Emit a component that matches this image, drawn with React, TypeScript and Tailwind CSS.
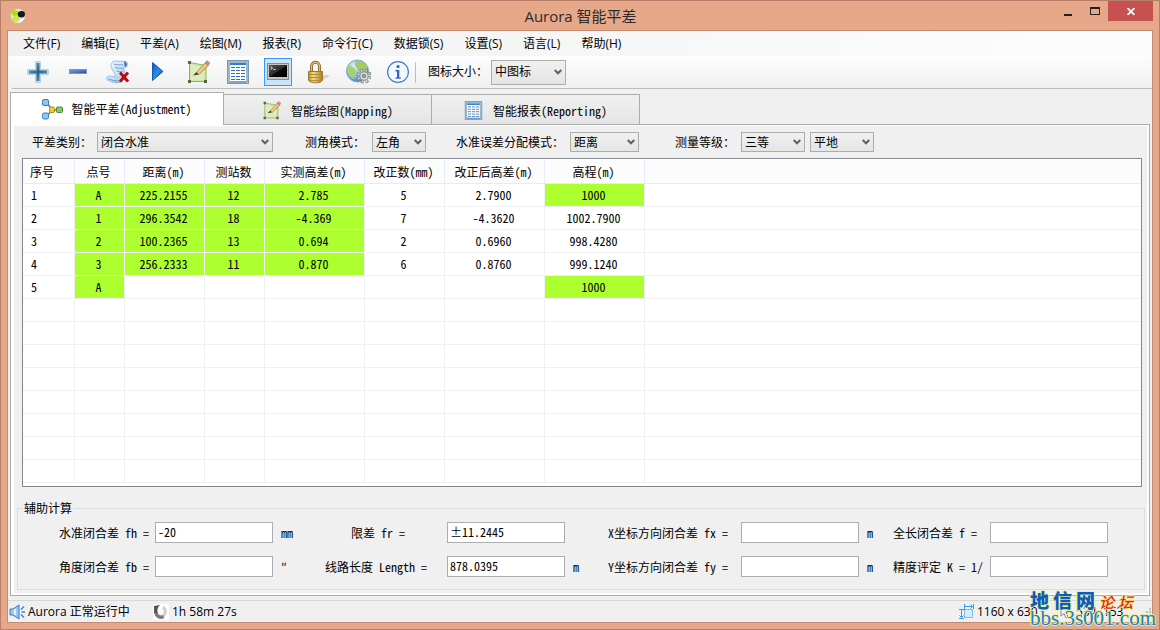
import React from "react";

const SONG = "font-['Noto_Sans_Mono_CJK_SC','DejaVu_Sans_Mono','Noto_Sans_CJK_SC',monospace]";
const UI = "font-['Open_Sans','Noto_Sans_CJK_SC',sans-serif]";

const menus = [
  "文件(F)",
  "编辑(E)",
  "平差(A)",
  "绘图(M)",
  "报表(R)",
  "命令行(C)",
  "数据锁(S)",
  "设置(S)",
  "语言(L)",
  "帮助(H)",
];

const columns = [
  { title: "序号", width: "w-[52px]" },
  { title: "点号", width: "w-[50px]" },
  { title: "距离(m)", width: "w-[80px]" },
  { title: "测站数", width: "w-[60px]" },
  { title: "实测高差(m)", width: "w-[100px]" },
  { title: "改正数(mm)", width: "w-[80px]" },
  { title: "改正后高差(m)", width: "w-[100px]" },
  { title: "高程(m)", width: "w-[100px]" },
  { title: "", width: "" },
];

const rows = [
  { cells: ["1", "A", "225.2155", "12", "2.785", "5", "2.7900", "1000"], green: [1, 2, 3, 4, 7] },
  { cells: ["2", "1", "296.3542", "18", "-4.369", "7", "-4.3620", "1002.7900"], green: [1, 2, 3, 4] },
  { cells: ["3", "2", "100.2365", "13", "0.694", "2", "0.6960", "998.4280"], green: [1, 2, 3, 4] },
  { cells: ["4", "3", "256.2333", "11", "0.870", "6", "0.8760", "999.1240"], green: [1, 2, 3, 4] },
  { cells: ["5", "A", "", "", "", "", "", "1000"], green: [1, 7] },
  ...Array.from({ length: 8 }, () => ({ cells: [] as string[], green: [] as number[] })),
];

/* ---------- icons ---------- */

const AppIcon = () => (
  <svg width="16" height="16" viewBox="0 0 16 16">
    <circle cx="8" cy="8" r="7.5" fill="#e9e9e4" stroke="#c9b8a8" />
    <ellipse cx="5" cy="5" rx="3.4" ry="3" fill="#b8d820" />
    <ellipse cx="5.8" cy="10.8" rx="3.8" ry="2.8" fill="#cfe63a" />
    <ellipse cx="11.4" cy="6.2" rx="3.6" ry="3.2" fill="#16181a" />
    <path d="M10 12c2 0 3.5-1 4-2.5-.5 3-2.5 4.5-5 4.5z" fill="#fff" />
  </svg>
);

const PlusIcon = () => (
  <svg width="24" height="24" viewBox="0 0 24 24">
    <defs>
      <linearGradient id="plus" x1="0" y1="0" x2="1" y2="1">
        <stop offset="0" stopColor="#7fabc9" />
        <stop offset="0.5" stopColor="#28628f" />
        <stop offset="1" stopColor="#7aa9c6" />
      </linearGradient>
    </defs>
    <path d="M9.500 1.500h5v8h8v5h-8v8h-5v-8h-8v-5h8z" fill="#bcd8e8" stroke="#b5d2e3" />
    <path d="M10.500 3h3v7.500H21v3h-7.500V21h-3v-7.500H3v-3h7.500z" fill="url(#plus)" />
  </svg>
);

const MinusIcon = () => (
  <svg width="24" height="24" viewBox="0 0 24 24">
    <defs>
      <linearGradient id="minus" x1="0" y1="0" x2="1" y2="1">
        <stop offset="0" stopColor="#7ba6ea" />
        <stop offset="1" stopColor="#1f48a0" />
      </linearGradient>
    </defs>
    <rect x="3.5" y="9.5" width="17" height="4" fill="url(#minus)" stroke="#7f93c2" />
  </svg>
);

const ScrollIcon = () => (
  <svg width="24" height="24" viewBox="0 0 24 24">
    <defs>
      <linearGradient id="scroll" x1="0" y1="0" x2="1" y2="1">
        <stop offset="0" stopColor="#f6fbff" />
        <stop offset="0.5" stopColor="#cfe5f6" />
        <stop offset="1" stopColor="#7fb2de" />
      </linearGradient>
    </defs>
    <path d="M6 3C7 .5 9 .8 11 1.200c3.500.5 6-.4 9 .3 2.500 1 2 4.500.5 5.500-1 .5-2 .2-2.500-.5-.5 3 1 6 1 9 0 4-2 6.500-5 7-4.500.8-9-.5-12.500-2.500C-.3 19 .5 16 3 16c2 0 4 1 6 1 1-3-3-7-4-10.500C4.500 5 5.300 4 6 3z" fill="url(#scroll)" stroke="#86b2d8" strokeWidth=".8" />
    <path d="M8 4c3 1.500 6 .5 9 .8M9 7.500c3 1 5 .4 8 .8M10.500 11c2 .8 4 .5 6.500.7M2 18.500c4 2 8 2.800 12 2.500" stroke="#6a9fd0" fill="none" />
    <path d="M18 1.500c3 0 3.500 4 1.500 5.500C18 6 18.500 3.500 18 1.500z" fill="#34689d" />
    <path d="M14 12.500l8 9M22 12.500l-8 9" stroke="#fff" strokeWidth="4.500" opacity=".5" />
    <path d="M14 12.500l8 9M22 12.500l-8 9" stroke="#b30d12" strokeWidth="3" />
  </svg>
);

const PlayIcon = () => (
  <svg width="24" height="24" viewBox="0 0 24 24">
    <defs>
      <linearGradient id="play" x1="0" y1="0" x2="1" y2="1">
        <stop offset="0" stopColor="#0d55b8" />
        <stop offset="0.5" stopColor="#2f8be6" />
        <stop offset="1" stopColor="#0a4aa8" />
      </linearGradient>
    </defs>
    <path d="M6.500 2.500v18L17 11.500z" fill="url(#play)" stroke="#1258b4" />
  </svg>
);

const MapIcon = ({ size = 24 }: { size?: number }) => (
  <svg width={size} height={size} viewBox="0 0 24 24">
    <path d="M3.500 2.500L20 5.500v16H3.500z" fill="#d3e6aa" stroke="#93b06a" />
    <path d="M5 5l13 2.500V20H5z" fill="#ddedbd" />
    <path d="M2 1h3v3H2zM2 20h3v3H2zM18 20h3v3h-3z" fill="#4f6a3a" />
    <path d="M10.500 12.500L19.500 2.500l3 2.500L13 14.500z" fill="#ecc46c" stroke="#9c7636" strokeWidth=".8" />
    <path d="M11.500 13L21 3.500" stroke="#f9e3a4" />
    <path d="M19 3l2-2.500L24 3l-2 2.500z" fill="#d9897c" stroke="#a86a60" strokeWidth=".5" />
    <path d="M7 15.500l3.500-3.500 2 2.500z" fill="#3f3d2c" />
  </svg>
);

const SheetIcon = ({ size = 24 }: { size?: number }) => (
  <svg width={size} height={size} viewBox="0 0 24 24">
    <rect x="1.5" y=".5" width="21" height="23" fill="#9db8cc" stroke="#7b98b0" />
    <rect x="4" y="3" width="16" height="18" fill="#fdfeff" />
    <path d="M4 4h16" stroke="#2b7fd6" strokeWidth="2" />
    <path d="M5 7.5h15M5 10.500h15M5 13.500h15M5 16.500h15M5 19.500h15" stroke="#2f6fb6" strokeDasharray="4 1" />
    <path d="M4 22h16" stroke="#5f92c0" />
  </svg>
);

const ConsoleIcon = () => (
  <svg width="24" height="24" viewBox="0 0 24 24">
    <defs>
      <linearGradient id="console" x1="0" y1="0" x2="1" y2="1">
        <stop offset="0" stopColor="#555" />
        <stop offset="0.5" stopColor="#2c2c2c" />
        <stop offset="0.52" stopColor="#0a0a0a" />
        <stop offset="1" stopColor="#000" />
      </linearGradient>
    </defs>
    <rect x="1.5" y="3.5" width="21" height="16" fill="#c4c6c8" stroke="#8a8d90" />
    <rect x="3" y="5" width="18" height="12" fill="url(#console)" />
    <path d="M4.500 6.500l2 1.500-2 1.500M7.500 9.500h2" stroke="#e8e8e8" fill="none" />
  </svg>
);

const LockIcon = () => (
  <svg width="24" height="24" viewBox="0 0 24 24">
    <defs>
      <linearGradient id="lock" x1="0" y1="0" x2="1" y2="0">
        <stop offset="0" stopColor="#c0923a" />
        <stop offset="0.35" stopColor="#f3d88a" />
        <stop offset="1" stopColor="#a87a28" />
      </linearGradient>
    </defs>
    <path d="M15 21l9-5-3-1-6 1z" fill="#bbb" opacity=".6" />
    <path d="M5.500 12V6.500C5.500.8 13.500.8 13.500 6.500V12" fill="none" stroke="#8c6f30" strokeWidth="3" />
    <path d="M5.500 12V6.500C5.500 1 13.500 1 13.500 6.500V12" fill="none" stroke="#dcc07a" strokeWidth="1.200" />
    <path d="M2.500 11.500h14v9c-2 3-12 3-14 0z" fill="url(#lock)" stroke="#9b7628" />
    <path d="M3 14.500h13M3 17.500h13M3 20.500h13" stroke="#b48c3c" />
  </svg>
);

const GlobeIcon = () => (
  <svg width="26" height="26" viewBox="0 0 26 26">
    <defs>
      <radialGradient id="globe" cx=".35" cy=".3" r=".8">
        <stop offset="0" stopColor="#e2f2fc" />
        <stop offset="0.6" stopColor="#7ab6de" />
        <stop offset="1" stopColor="#3873a8" />
      </radialGradient>
    </defs>
    <circle cx="12.5" cy="12" r="11" fill="url(#globe)" stroke="#7ea8c8" />
    <path d="M11 2c4-1 9 1 11 4 1 3 0 5-2 5-2 1-3 0-5 1-2 0-3-1-3-3-2-2-3-3-1-7z" fill="#a3c96c" />
    <path d="M3 7c3-1 7 2 8 5 0 3-2 4-2 8-4-1-8-7-6-13z" fill="#a9cf74" />
    <circle cx="19" cy="17" r="5.6" fill="none" stroke="#7b7b7b" strokeWidth="3.800" strokeDasharray="2.600 1.800" />
    <circle cx="19" cy="17" r="5.400" fill="none" stroke="#dedede" strokeWidth="2.600" strokeDasharray="1.400 2.840" strokeDashoffset="-.6" />
    <circle cx="19" cy="17" r="4.200" fill="#e6e6e6" stroke="#9a9a9a" strokeWidth="1.400" />
    <circle cx="19" cy="17" r="1.800" fill="#8fb0a0" stroke="#777" />
  </svg>
);

const InfoIcon = () => (
  <svg width="24" height="24" viewBox="0 0 24 24">
    <circle cx="12" cy="12" r="10.4" fill="#f3f8fe" stroke="#4a7cc4" strokeWidth="1.200" />
    <circle cx="12" cy="6.500" r="1.600" fill="#2b66c0" />
    <path d="M9.500 10h3.800v7.500h1.500v1.300H9.500v-1.300H11v-6H9.500z" fill="#2b66c0" />
  </svg>
);

const NetworkIcon = () => (
  <svg width="21" height="21" viewBox="0 0 21 21">
    <path d="M5 4l5 7M5 17l5-6M10 11h7" stroke="#767676" fill="none" strokeWidth="1.500" />
    <rect x=".5" y=".5" width="6" height="6" rx="1.500" fill="#8fc6f4" stroke="#3c7cbc" />
    <rect x=".5" y="14" width="6" height="6" rx="1.500" fill="#8fc6f4" stroke="#3c7cbc" />
    <rect x="7.500" y="8" width="5" height="5.500" rx="1.500" fill="#f4cd2c" stroke="#b3901a" />
    <rect x="14.500" y="8" width="6" height="5.500" rx="1" fill="#8cc468" stroke="#4d8a3a" />
  </svg>
);

const SpeakerIcon = () => (
  <svg width="17" height="16" viewBox="0 0 17 16">
    <path d="M1 5h3l6-4v14l-6-4H1z" fill="#9ccbf2" stroke="#3878bd" />
    <path d="M6 5v6" stroke="#fff" strokeWidth="1.500" />
    <path d="M12 5.500l3-3M12.500 8h3.500M12 10.500l3 3" stroke="#4184c6" strokeWidth="1.500" />
  </svg>
);

const SpinnerIcon = () => (
  <svg width="16" height="16" viewBox="0 0 16 16">
    <rect width="16" height="16" fill="#fdfdfd" />
    <path d="M10 3.200A5.500 5.500 0 0 1 8 13" fill="none" stroke="#cfcfcf" strokeWidth="3" />
    <path d="M10.500 12.500C7 14.500 3 12 3 8" fill="none" stroke="#7a7a7a" strokeWidth="3.500" />
    <path d="M1 2l6-1c-2 2-3 4-2.500 8L1 9z" fill="#555" />
  </svg>
);

const SizeIcon = () => (
  <svg width="15" height="15" viewBox="0 0 15 15">
    <rect x="5.5" y="5.5" width="8" height="8" fill="#d6ecfb" stroke="#49a4e6" strokeDasharray="2 1" />
    <path d="M5.500 2.500h8M11.500.5l2 2-2 2M5.500 0v5M14.500 0v5M2.500 5.500v8M.5 11.500l2 2 2-2M0 5.500h5M0 14.500h5" fill="none" stroke="#3a9be2" />
  </svg>
);

const CursorIcon = () => (
  <svg width="12" height="16" viewBox="0 0 12 16">
    <path d="M1 1v11l3-2.500 2 4.500 2-1-2-4.500h4z" fill="#f6f6f6" stroke="#8a8a8a" />
  </svg>
);

const GripIcon = () => (
  <svg width="8" height="8" viewBox="0 0 8 8">
    <path d="M6 0h2v2H6zM3 3h2v2H3zM6 3h2v2H6zM0 6h2v2H0zM3 6h2v2H3zM6 6h2v2H6z" fill="#bcbcbc" />
  </svg>
);

const toolbar = [
  { label: "添加", icon: <PlusIcon /> },
  { label: "删除", icon: <MinusIcon /> },
  { label: "清空", icon: <ScrollIcon /> },
  { label: "计算", icon: <PlayIcon /> },
  { label: "绘图", icon: <MapIcon /> },
  { label: "报表", icon: <SheetIcon /> },
  { label: "命令行", icon: <ConsoleIcon />, active: true },
  { label: "数据锁", icon: <LockIcon /> },
  { label: "设置", icon: <GlobeIcon /> },
  { label: "关于", icon: <InfoIcon /> },
];

/* ---------- controls ---------- */

const Combo = ({ id, label, value, className = "" }: any) => (
  <div className={`relative ${className}`}>
    <select
      id={id}
      aria-label={label}
      defaultValue={value}
      className="h-full w-full appearance-none border border-[#acacac] bg-linear-to-b from-[#f0f0f0] to-[#e5e5e5] pl-[3px] text-xs leading-4 text-black outline-none"
    >
      <option>{value}</option>
    </select>
    <svg className="pointer-events-none absolute top-1/2 right-1 -translate-y-1/2" width="8" height="6" viewBox="0 0 8 6">
      <path d="M.7 1L4 4.300 7.300 1" fill="none" stroke="#606060" strokeWidth="2" />
    </svg>
  </div>
);

const Tab = ({ icon, text, active = false }: any) => (
  <button
    role="tab"
    aria-selected={active}
    className={
      active
        ? "relative z-10 -mb-px flex h-[33px] w-[214px] items-center justify-center gap-2 border border-b-0 border-[#acacac] bg-white"
        : "flex h-[30px] w-[208px] items-center justify-center gap-[10px] border border-b-0 border-l-0 border-[#acacac] bg-linear-to-b from-[#f0f0f0] to-[#e5e5e5] pt-[2px]"
    }
  >
    {icon}
    {text}
  </button>
);

const Field = ({ id, label, value = "", unit = "", align }: any) => (
  <>
    <label htmlFor={id} className={`whitespace-pre ${align}`}>
      {label}
    </label>
    <input id={id} defaultValue={value} className="h-[21px] border border-[#abadb3] bg-white px-[2px] pb-[2px] text-xs outline-none" />
    <span className="pl-2">{unit}</span>
  </>
);

const TitleBar = () => (
  <header className={`relative flex h-[29px] shrink-0 items-center pl-[9px] ${UI}`}>
    <AppIcon />
    <h1 className="flex-1 pr-[24px] text-center text-[15px] leading-5 text-[#2b2b2b]">Aurora 智能平差</h1>
    <div className="absolute top-0 right-[6px] flex h-5">
      <button aria-label="最小化" className="flex w-[27px] items-center justify-center pt-[7px]">
        <span className="h-[2px] w-2 bg-[#222]" />
      </button>
      <button aria-label="最大化" className="flex w-[27px] items-center justify-center">
        <span className="h-2 w-[10px] border border-t-2 border-[#222]" />
      </button>
      <button aria-label="关闭" className="flex w-[45px] items-center justify-center bg-[#c75050]">
        <svg width="8" height="7" viewBox="0 0 8 7">
          <path d="M.5 0l7 7M7.500 0l-7 7" stroke="#fff" strokeWidth="1.800" />
        </svg>
      </button>
    </div>
  </header>
);

const DataTable = () => (
  <div className="mr-[5px] ml-2 flex-1 overflow-hidden border border-[#828790] bg-white pt-px">
    <table className="w-full table-fixed border-separate border-spacing-0 text-xs leading-4">
      <thead>
        <tr className="h-6 bg-[#fcfcfc]">
          {columns.map((col, i) => (
            <th
              key={i}
              className={`${col.width} border-b border-[#e3ecf7] p-0 font-normal whitespace-nowrap ${
                i === 0 ? "border-r pl-[7px] text-left" : i < 8 ? "border-r pr-[2px]" : ""
              }`}
            >
              {col.title}
            </th>
          ))}
        </tr>
      </thead>
      <tbody>
        {rows.map((row, r) => (
          <tr key={r} className="h-[23px]">
            {columns.map((_, i) => (
              <td
                key={i}
                className={`border-b border-[#f0f0f0] p-0 ${i < 8 ? "border-r" : ""} ${
                  i === 0 ? "pl-2 text-left" : "pr-[2px] text-center"
                } ${row.green.includes(i) ? "bg-[#adff2f] bg-clip-padding" : ""}`}
              >
                {row.cells[i]}
              </td>
            ))}
          </tr>
        ))}
      </tbody>
    </table>
  </div>
);

const Watermark = () => (
  <div className="pointer-events-none absolute right-[5px] bottom-[3px] w-[124px] whitespace-nowrap [text-shadow:1px_0_#f4ee8c,-1px_0_#f4ee8c,0_1px_#f4ee8c,0_-1px_#f4ee8c]">
    <div className="flex items-center gap-1 font-['Noto_Sans_CJK_SC',sans-serif] leading-5">
      <span className="flex gap-1 text-[19px] font-bold text-[#0b5bc4]">
        <b>地</b>
        <b>信</b>
        <b>网</b>
      </span>
      <span className="flex gap-1 pt-1 text-[15px] leading-4 font-medium text-[#ee2211] italic">
        <i>论</i>
        <i>坛</i>
      </span>
    </div>
    <div className="font-['Liberation_Serif',serif] text-[21px] leading-4 text-[#1c7fd6]">bbs.3s001.com</div>
  </div>
);

export default function App() {
  return (
    <div className="relative flex min-h-screen flex-col border border-[#b87f68] bg-[#e6a889] text-black">
      <TitleBar />
      <main className={`mx-[6px] mb-[6px] flex flex-1 flex-col border border-[#c48b71] bg-[#f0f0f0] text-xs ${SONG}`}>
        <nav className={`flex h-[25px] shrink-0 items-center gap-px bg-linear-to-r from-[#f0f0f0] to-[#fdfdfd] pl-[5px] ${UI}`}>
          {menus.map((m) => (
            <button key={m} className="px-[10px] leading-4">
              {m}
            </button>
          ))}
        </nav>

        <div className={`flex h-8 shrink-0 items-center bg-linear-to-b from-[#fdfdfd] to-[#f0f0f0] pl-4 ${UI}`}>
          <div className="flex gap-3">
            {toolbar.map((t) => (
              <button
                key={t.label}
                aria-label={t.label}
                className={`flex size-7 items-center justify-center ${t.active ? "border border-[#3399ff] bg-[#cce4fb]" : ""}`}
              >
                {t.icon}
              </button>
            ))}
          </div>
          <div className="ml-[3px] h-[21px] w-px bg-[#bdbdbd]" />
          <label htmlFor="icon-size" className="ml-3 w-[63px]">
            图标大小：
          </label>
          <Combo id="icon-size" value="中图标" className="h-[25px] w-[75px]" />
        </div>
        <div className="ml-1 h-px shrink-0 bg-[#bdbdbd]" />

        <div role="tablist" className="flex shrink-0 items-end px-[2px] pt-[3px]">
          <Tab active icon={<NetworkIcon />} text="智能平差(Adjustment)" />
          <Tab icon={<MapIcon size={19} />} text="智能绘图(Mapping)" />
          <Tab icon={<SheetIcon size={19} />} text="智能报表(Reporting)" />
        </div>

        <section className="mx-[2px] mb-1 flex flex-1 flex-col border border-[#acacac] bg-white pt-px pr-[2px] pb-[2px] pl-[3px]">
          <div className="flex flex-1 flex-col bg-[#f0f0f0]">
            <div className="flex items-center py-[6px] pl-[18px]">
              <label htmlFor="kind" className="w-[65px]">平差类别：</label>
              <Combo id="kind" value="闭合水准" className="h-5 w-[176px]" />
              <label htmlFor="angle" className="ml-8 w-[67px]">测角模式：</label>
              <Combo id="angle" value="左角" className="h-5 w-[54px]" />
              <label htmlFor="spread" className="ml-[30px] w-[114px]">水准误差分配模式：</label>
              <Combo id="spread" value="距离" className="h-5 w-[69px]" />
              <label htmlFor="grade" className="ml-9 w-[66px]">测量等级：</label>
              <Combo id="grade" value="三等" className="h-5 w-16" />
              <Combo label="地形" value="平地" className="ml-[5px] h-5 w-16" />
            </div>

            <DataTable />

            <fieldset className="mt-[13px] mr-[2px] mb-[3px] ml-[3px] border border-[#dcdcdc] pt-[6px] pb-3">
              <legend className="ml-[5px] px-px leading-4">辅助计算</legend>
              <div className="grid grid-cols-[137px_118px_36px_138px_118px_28px_148px_118px_20px_111px_118px_1fr] items-center gap-y-[13px]">
                <Field id="fh" label="水准闭合差 fh =" value="-20" unit="mm" align="pr-[6px] text-right" />
                <Field id="fr" label="限差 fr =" value="±11.2445" align="text-center" />
                <Field id="fx" label="X坐标方向闭合差 fx =" unit="m" align="pr-[13px] text-right" />
                <Field id="f" label="全长闭合差 f =" align="pl-[14px]" />
                <Field id="fb" label="角度闭合差 fb =" unit="″" align="pr-[6px] text-right" />
                <Field id="len" label="线路长度 Length =" value="878.0395" unit="m" align="pr-1 text-center" />
                <Field id="fy" label="Y坐标方向闭合差 fy =" unit="m" align="pr-[13px] text-right" />
                <Field id="k" label="精度评定 K = 1/" align="pl-[14px]" />
              </div>
            </fieldset>
          </div>
        </section>

        <footer className={`flex h-[22px] shrink-0 items-center border-t border-[#d7d7d7] pl-px leading-4 ${UI}`}>
          <SpeakerIcon />
          <span className="ml-[2px] w-[125px]">Aurora 正常运行中</span>
          <SpinnerIcon />
          <span className="ml-[3px]">1h 58m 27s</span>
          <div className="ml-auto flex w-[101px] items-center gap-[3px]">
            <SizeIcon />
            <span>1160 x 630</span>
          </div>
          <div className="flex w-[92px] items-center gap-1 pr-px">
            <CursorIcon />
            <span className="flex-1">534, 153</span>
            <GripIcon />
          </div>
        </footer>
      </main>
      <Watermark />
    </div>
  );
}
